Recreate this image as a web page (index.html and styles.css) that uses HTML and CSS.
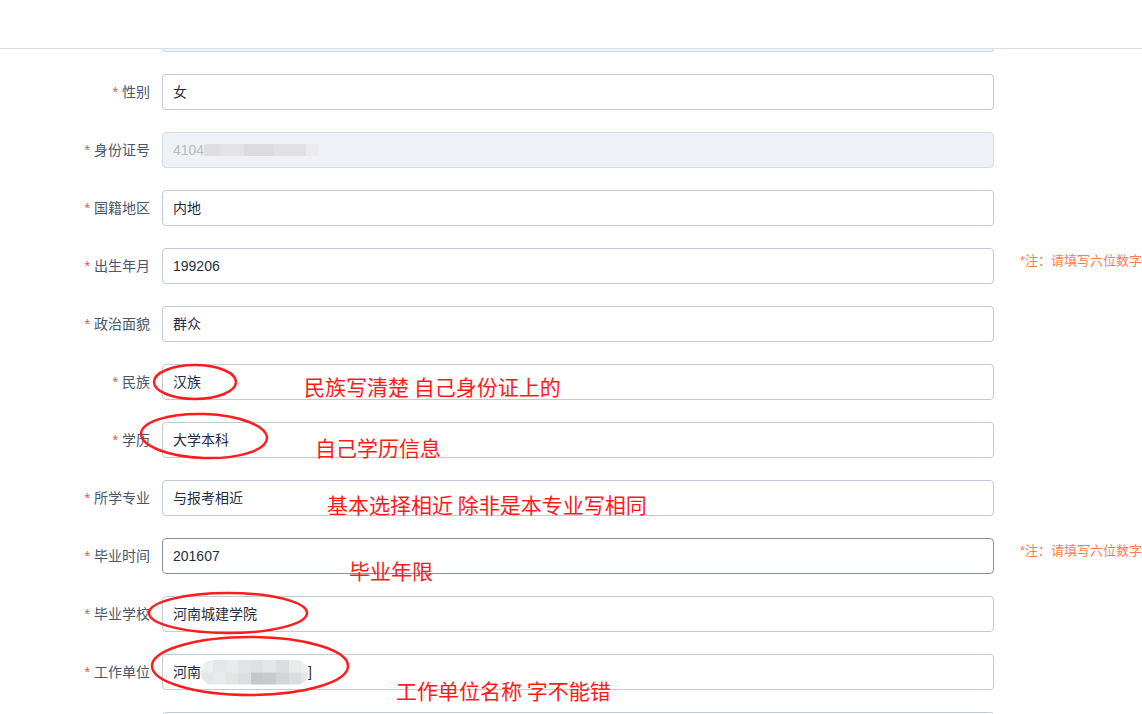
FILE: index.html
```html
<!DOCTYPE html>
<html lang="zh-CN">
<head>
<meta charset="utf-8">
<title>报名信息</title>
<link rel="stylesheet" href="styles.css">
</head>
<body>
<div class="page">
  <div class="header"></div>
  <div class="form">
    <div class="stub"></div>

    <div class="row">
      <label class="label"><span class="req">*</span>性别</label>
      <div class="input">女</div>
    </div>
    <div class="row">
      <label class="label"><span class="req">*</span>身份证号</label>
      <div class="input disabled">4104<span class="mask-id"></span></div>
    </div>
    <div class="row">
      <label class="label"><span class="req">*</span>国籍地区</label>
      <div class="input">内地</div>
    </div>
    <div class="row">
      <label class="label"><span class="req">*</span>出生年月</label>
      <div class="input">199206</div>
      <div class="note">*注：请填写六位数字</div>
    </div>
    <div class="row">
      <label class="label"><span class="req">*</span>政治面貌</label>
      <div class="input">群众</div>
    </div>
    <div class="row">
      <label class="label"><span class="req">*</span>民族</label>
      <div class="input">汉族</div>
    </div>
    <div class="row">
      <label class="label"><span class="req">*</span>学历</label>
      <div class="input">大学本科</div>
    </div>
    <div class="row">
      <label class="label"><span class="req">*</span>所学专业</label>
      <div class="input">与报考相近</div>
    </div>
    <div class="row">
      <label class="label"><span class="req">*</span>毕业时间</label>
      <div class="input focus">201607</div>
      <div class="note">*注：请填写六位数字</div>
    </div>
    <div class="row">
      <label class="label"><span class="req">*</span>毕业学校</label>
      <div class="input">河南城建学院</div>
    </div>
    <div class="row">
      <label class="label"><span class="req">*</span>工作单位</label>
      <div class="input">河南<span class="mask-blob"></span>]</div>
    </div>
    <div class="row">
      <div class="label"></div>
      <div class="input"></div>
    </div>
  </div>

  <svg class="marks" width="1142" height="714" viewBox="0 0 1142 714">
    <ellipse cx="195" cy="382" rx="41" ry="17" />
    <ellipse cx="204" cy="436" rx="63" ry="22" transform="rotate(2 204 436)" />
    <ellipse cx="228" cy="613" rx="79" ry="20" />
    <ellipse cx="250" cy="666" rx="98" ry="29" />
  </svg>

  <div class="note-a a1">民族写清楚 自己身份证上的</div>
  <div class="note-a a2">自己学历信息</div>
  <div class="note-a a3">基本选择相近 除非是本专业写相同</div>
  <div class="note-a a4">毕业年限</div>
  <div class="note-a a5">工作单位名称 字不能错</div>
</div>
</body>
</html>
```

FILE: styles.css
```css
html, body {
  margin: 0;
  padding: 0;
  background: #ffffff;
}
body {
  width: 1142px;
  height: 714px;
  overflow: hidden;
  font-family: "Liberation Sans", "Noto Sans CJK SC", sans-serif;
  font-size: 14px;
}
.page {
  position: relative;
  width: 1142px;
  height: 714px;
  overflow: hidden;
}
.header {
  height: 48px;
  border-bottom: 1px solid #d8dce5;
  background: #fff;
}
.stub {
  margin-left: 162px;
  width: 830px;
  height: 2px;
  border: 1px solid #d1dbe5;
  border-top: none;
  border-radius: 0 0 4px 4px;
  background: #eef1f6;
}
.row {
  display: grid;
  grid-template-columns: 162px 832px 148px;
  margin-top: 22px;
  height: 36px;
}
.label {
  box-sizing: border-box;
  padding-right: 12px;
  text-align: right;
  line-height: 36px;
  color: #48576a;
  font-size: 14px;
  white-space: nowrap;
}
.req {
  color: #ff4949;
  margin-right: 4px;
}
.input {
  box-sizing: border-box;
  height: 36px;
  border: 1px solid #bfcbd9;
  border-radius: 4px;
  padding: 0 10px;
  line-height: 34px;
  color: #1f2d3d;
  font-size: 14px;
  white-space: nowrap;
  display: flex;
  align-items: center;
}
.input.disabled {
  background: #eef1f6;
  border-color: #d1dbe5;
  color: #bbbbbb;
}
.input.focus {
  border-color: #8391a5;
}
.note {
  padding-left: 26px;
  line-height: 26px;
  font-size: 13px;
  color: #ff7b4f;
  white-space: nowrap;
  overflow: hidden;
}
.mask-id {
  display: inline-block;
  width: 114px;
  height: 12px;
  background: linear-gradient(to right, #dedee1 0, #dedee1 16px, #e3e3e6 16px, #e3e3e6 40px, #dcdcdf 40px, #dcdcdf 70px, #e1e1e4 70px, #e1e1e4 102px, #ececee 102px);
}
.mask-blob {
  display: inline-block;
  width: 107px;
  height: 25px;
  border-radius: 12px;
  background:
    linear-gradient(to right, #eceef0 0, #eceef0 12px, #e6e7e9 12px, #e6e7e9 25px, #e9eaeb 25px, #e9eaeb 37px, #e2e3e5 37px, #e2e3e5 50px, #dfe0e2 50px, #dfe0e2 62px, #e4e5e7 62px, #e4e5e7 75px, #dcdde0 75px, #dcdde0 88px, #e9eaec 88px, #e9eaec 100px, #eeeff1 100px) top / 100% 50% no-repeat,
    linear-gradient(to right, #e5e6e8 0, #e5e6e8 12px, #e9eaeb 12px, #e9eaeb 25px, #e4e5e7 25px, #e4e5e7 37px, #dddee0 37px, #dddee0 50px, #c6c7c9 50px, #c6c7c9 62px, #c9cacc 62px, #c9cacc 75px, #d4d5d7 75px, #d4d5d7 88px, #dcdde0 88px, #dcdde0 100px, #e3e4e6 100px) bottom / 100% 50% no-repeat;
}
.marks {
  position: absolute;
  left: 0;
  top: 0;
  pointer-events: none;
}
.marks ellipse {
  fill: none;
  stroke: #ff1c1c;
  stroke-width: 2.5;
}
.note-a {
  position: absolute;
  font-family: "Noto Sans CJK SC", sans-serif;
  font-size: 21px;
  line-height: 21px;
  color: #ff1a1a;
  white-space: nowrap;
}
.a1 { left: 304px; top: 376px; }
.a2 { left: 315px; top: 437px; }
.a3 { left: 327px; top: 494px; }
.a4 { left: 349px; top: 560px; }
.a5 { left: 396px; top: 680px; }
```
